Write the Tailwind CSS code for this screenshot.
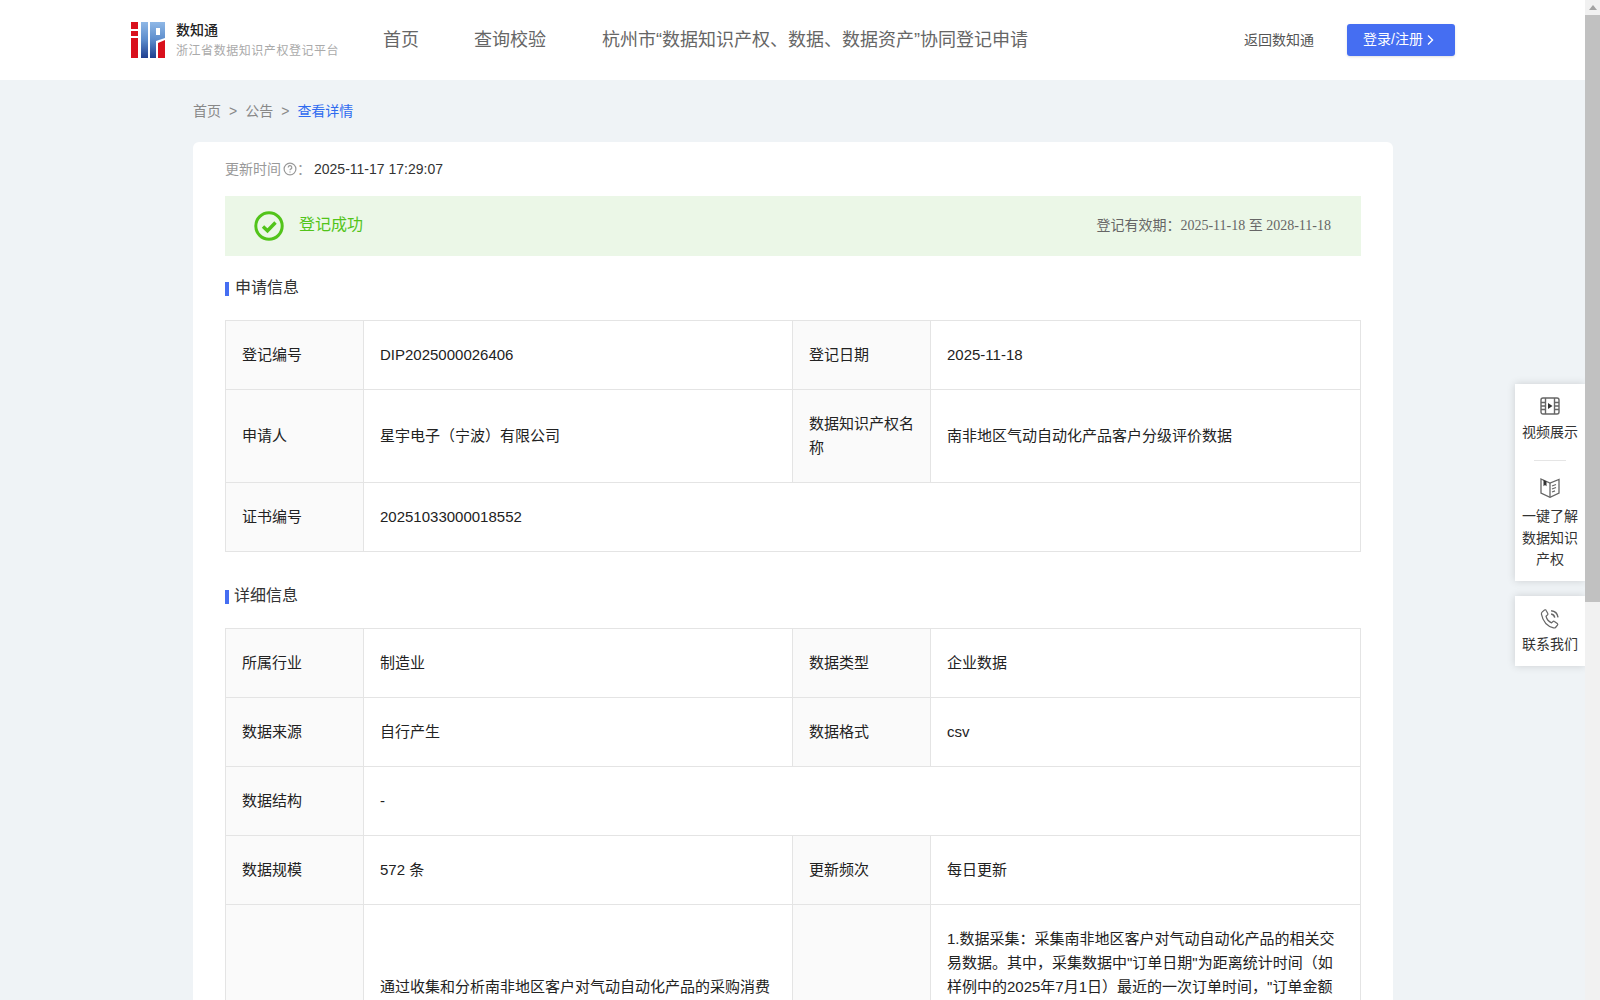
<!DOCTYPE html>
<html lang="zh-CN">
  <head>
    <meta charset="UTF-8" />
    <title>数知通</title>
    <script src="https://cdn.jsdelivr.net/npm/@tailwindcss/browser@4"></script>
  </head>
  <body class="h-[1000px] overflow-hidden bg-[#eff3f6] font-['Liberation_Sans','Noto_Sans_CJK_SC',sans-serif] text-[#333]">
    <div class="flex h-[1000px]">
      <div class="relative w-[1585px] h-[1000px] overflow-hidden">
        <!-- header -->
        <header class="h-20 bg-white flex items-center pl-[131px] pr-[130px]">
          <svg class="w-[34px] h-9 mr-[11px]" viewBox="0 0 34 36">
            <defs>
              <linearGradient id="blue" x1="0" y1="0" x2="0" y2="1">
                <stop offset="0" stop-color="#8fb8e6" />
                <stop offset="0.5" stop-color="#5c8ccb" />
                <stop offset="1" stop-color="#1f3f8f" />
              </linearGradient>
            </defs>
            <rect x="0" y="0" width="7" height="7" fill="#d9101c" />
            <rect x="0" y="9" width="7" height="5" fill="#d9101c" />
            <rect x="0" y="16" width="7" height="20" fill="#d9101c" />
            <rect x="10" y="0" width="7" height="36" fill="url(#blue)" />
            <path d="M19 0h15v16l-9 3v17h-6z" fill="url(#blue)" />
            <rect x="25" y="6" width="4" height="7" fill="#fff" />
            <path d="M27 21l7-3v18h-7z" fill="#d9101c" />
          </svg>
          <div class="w-[207px]">
            <div class="text-sm leading-5 font-medium text-[#222]">数知通</div>
            <div class="text-xs leading-5 pt-px text-[#aaa] tracking-[0.55px]">浙江省数据知识产权登记平台</div>
          </div>
          <nav class="flex text-lg text-[#666]">
            <a class="w-[91px]">首页</a>
            <a class="w-[128px]">查询校验</a>
            <a>杭州市“数据知识产权、数据、数据资产”协同登记申请</a>
          </nav>
          <a class="ml-auto text-sm text-[#555]">返回数知通</a>
          <button class="ml-[33px] w-[108px] h-8 rounded-[3px] bg-[#456ef2] text-white text-sm flex items-center justify-center gap-[3px] pr-[5px] shadow-sm">
            <span class="pb-[2px]">登录/注册</span>
            <svg class="w-2 h-3 -mt-px" viewBox="0 0 8 12" fill="none" stroke="currentColor" stroke-width="1.4"><path d="M2 1.500 6.500 6 2 10.500" /></svg>
          </button>
        </header>

        <main class="w-[1200px] ml-[193px]">
          <div class="h-[62px] pb-px flex items-center text-sm text-[#888] gap-[8px]">
            <span>首页</span><span>&gt;</span><span>公告</span><span>&gt;</span><span class="text-[#2f6bf0]">查看详情</span>
          </div>
          <section class="bg-white rounded-md px-8 pt-[17px] pb-10">
            <div class="flex items-center h-5 text-sm text-[#999]">
              <span>更新时间</span>
              <svg class="w-[14px] h-[14px] ml-[2px]" viewBox="0 0 14 14" fill="none" stroke="#999" stroke-width="1.2">
                <circle cx="7" cy="7" r="5.900" />
                <path d="M5.200 5.500a1.800 1.800 0 1 1 2.600 1.600c-.5.300-.8.600-.8 1.200" />
                <path d="M7 9.600v1" />
              </svg>
              <span>：</span>
              <span class="text-[#333] ml-[3px]">2025-11-17 17:29:07</span>
            </div>

            <div class="mt-[17px] h-[60px] bg-[#ebf7e7] flex items-center pl-[29px] pr-[30px]">
              <svg class="w-[30px] h-[30px] mr-[15px]" viewBox="0 0 30 30" fill="none" stroke="#52c41a">
                <circle cx="15" cy="15" r="13.200" stroke-width="3" />
                <path d="M9 15.500l4.500 4.300L21.500 11.500" stroke-width="3.400" />
              </svg>
              <span class="text-base text-[#52c41a] mb-[2px]">登记成功</span>
              <span class="ml-auto text-sm text-[#666] mb-[2px]">登记有效期：<span class="font-['Liberation_Serif','Noto_Sans_CJK_SC',serif]">2025-11-18 至 2028-11-18</span></span>
            </div>

            <h3 class="mt-[21px] h-5 pt-px flex items-center text-base text-[#333] font-normal">
              <i class="w-1 h-[14px] bg-[#456ef2] mr-[6px] mt-[3px]"></i>申请信息
            </h3>
            <table class="mt-[23px] w-[1136px] table-fixed border-collapse text-[15px] text-[#222]">
              <colgroup><col class="w-[138px]" /><col class="w-[429px]" /><col class="w-[138px]" /><col /></colgroup>
              <tbody>
                <tr class="h-[69px]">
                  <td class="border border-[#e4e4e4] bg-[#fafafa] px-4">登记编号</td>
                  <td class="border border-[#e4e4e4] px-4">DIP2025000026406</td>
                  <td class="border border-[#e4e4e4] bg-[#fafafa] px-4">登记日期</td>
                  <td class="border border-[#e4e4e4] px-4">2025-11-18</td>
                </tr>
                <tr class="h-[93px]">
                  <td class="border border-[#e4e4e4] bg-[#fafafa] px-4">申请人</td>
                  <td class="border border-[#e4e4e4] px-4">星宇电子（宁波）有限公司</td>
                  <td class="border border-[#e4e4e4] bg-[#fafafa] px-4 leading-6">数据知识产权名称</td>
                  <td class="border border-[#e4e4e4] px-4">南非地区气动自动化产品客户分级评价数据</td>
                </tr>
                <tr class="h-[69px]">
                  <td class="border border-[#e4e4e4] bg-[#fafafa] px-4">证书编号</td>
                  <td class="border border-[#e4e4e4] px-4" colspan="3">20251033000018552</td>
                </tr>
              </tbody>
            </table>

            <h3 class="mt-[33px] h-5 pt-px flex items-center text-base text-[#333] font-normal">
              <i class="w-1 h-[14px] bg-[#456ef2] mr-[5px] mt-[3px]"></i>详细信息
            </h3>
            <table class="mt-[23px] w-[1136px] table-fixed border-collapse text-[15px] text-[#222]">
              <colgroup><col class="w-[138px]" /><col class="w-[429px]" /><col class="w-[138px]" /><col /></colgroup>
              <tbody>
                <tr class="h-[69px]">
                  <td class="border border-[#e4e4e4] bg-[#fafafa] px-4">所属行业</td>
                  <td class="border border-[#e4e4e4] px-4">制造业</td>
                  <td class="border border-[#e4e4e4] bg-[#fafafa] px-4">数据类型</td>
                  <td class="border border-[#e4e4e4] px-4">企业数据</td>
                </tr>
                <tr class="h-[69px]">
                  <td class="border border-[#e4e4e4] bg-[#fafafa] px-4">数据来源</td>
                  <td class="border border-[#e4e4e4] px-4">自行产生</td>
                  <td class="border border-[#e4e4e4] bg-[#fafafa] px-4">数据格式</td>
                  <td class="border border-[#e4e4e4] px-4">csv</td>
                </tr>
                <tr class="h-[69px]">
                  <td class="border border-[#e4e4e4] bg-[#fafafa] px-4">数据结构</td>
                  <td class="border border-[#e4e4e4] px-4" colspan="3">-</td>
                </tr>
                <tr class="h-[69px]">
                  <td class="border border-[#e4e4e4] bg-[#fafafa] px-4">数据规模</td>
                  <td class="border border-[#e4e4e4] px-4">572 条</td>
                  <td class="border border-[#e4e4e4] bg-[#fafafa] px-4">更新频次</td>
                  <td class="border border-[#e4e4e4] px-4">每日更新</td>
                </tr>
                <tr>
                  <td class="border border-[#e4e4e4] bg-[#fafafa] px-4"></td>
                  <td class="border border-[#e4e4e4] px-4 pt-[70px] align-top leading-6">通过收集和分析南非地区客户对气动自动化产品的采购消费</td>
                  <td class="border border-[#e4e4e4] bg-[#fafafa] px-4"></td>
                  <td class="border border-[#e4e4e4] px-4 pt-[22px] pb-[22px] leading-6">1.数据采集：采集南非地区客户对气动自动化产品的相关交易数据。其中，采集数据中"订单日期"为距离统计时间（如样例中的2025年7月1日）最近的一次订单时间，"订单金额</td>
                </tr>
              </tbody>
            </table>
          </section>
        </main>

        <!-- floating side panel -->
        <aside class="absolute left-[1515px] top-[384px] w-[70px] text-sm text-[#333] text-center">
          <div class="h-[197px] bg-white shadow-[0_0_8px_rgba(0,0,0,0.15)] pt-3">
            <svg class="w-5 h-5 mx-auto" viewBox="0 0 20 20" fill="none" stroke="#666" stroke-width="1.400">
              <rect x="1" y="2" width="18" height="16" rx="2" />
              <path d="M5.500 2v16M14.500 2v16M1 6.500h4.500M1 10h4.500M1 13.500h4.500M14.500 6.500H19M14.500 10H19M14.500 13.500H19" />
              <path d="M8 7l4.500 3L8 13z" fill="#333" stroke="none" />
            </svg>
            <div class="mt-[5px] leading-[22px]">视频展示</div>
            <div class="w-8 h-px bg-[#e5e5e5] mx-auto mt-[17px] mb-[17px]"></div>
            <svg class="w-5 h-5 mx-auto" viewBox="0 0 20 20" fill="none" stroke="#666" stroke-width="1.300">
              <path d="M1 1 10 5 19 1.500V15L10 19.300 1 15z" />
              <path d="M10 5v14.300" />
              <path d="M12 8l4-1.500M12 11l4-1.500M12 14l3-1.200" />
              <path d="M3.500 1.800v6.500l1.500-1.200 1.500 1.200V3.500z" fill="#333" stroke="none" />
            </svg>
            <div class="mt-[8px] leading-[21.500px] px-[6px]">一键了解数据知识产权</div>
          </div>
          <div class="mt-[15px] bg-white shadow-[0_0_8px_rgba(0,0,0,0.15)] pt-3 h-[70px]">
            <svg class="w-[22px] h-[22px] mx-auto" viewBox="0 0 20 20" fill="none" stroke="#666" stroke-width="1.100">
              <path d="M3 3.500 5 1.800c.6-.4 1.200-.2 1.500.4L8 5c.2.500.1 1-.3 1.300L6.400 7.500c.6 2.500 2.700 4.900 5 6l1.300-1.200c.4-.4.900-.4 1.300-.1l2.600 1.800c.5.400.6 1 .2 1.500l-1.600 2c-.5.600-1.300.8-2 .6C7.500 16.500 3.500 12 2.200 5.500c-.1-.8.200-1.500.8-2z" />
              <path d="M11 2.500c3.300.3 5.800 2.800 6.300 6M11 5.500c1.700.2 3 1.500 3.300 3.200" stroke-width="1.300" />
            </svg>
            <div class="mt-[3px] leading-[22px]">联系我们</div>
          </div>
        </aside>
      </div>

      <!-- scrollbar -->
      <div class="w-[15px] h-[1000px] bg-[#f1f1f1] shrink-0">
        <div class="h-[15px] flex items-center justify-center">
          <div class="w-0 h-0 border-x-4 border-x-transparent border-b-[5px] border-b-[#a3a3a3]"></div>
        </div>
        <div class="h-[587px] bg-[#c1c1c1]"></div>
      </div>
    </div>
  </body>
</html>
